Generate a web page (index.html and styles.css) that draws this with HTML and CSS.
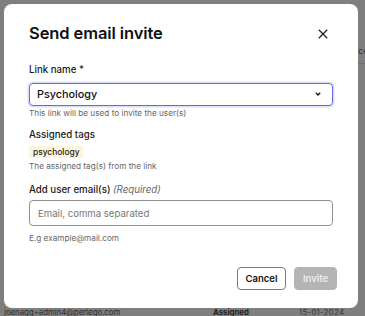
FILE: index.html
```html
<!DOCTYPE html>
<html>
<head>
<meta charset="utf-8">
<link rel="stylesheet" href="styles.css">
</head>
<body>
<div class="backdrop">
  <div class="bg-side">ce</div>
  <div class="bg-line"></div>
  <div class="bg-row">
    <span class="bg-email">joenagg+admin4@perlego.com</span>
    <span class="bg-status">Assigned</span>
    <span class="bg-date">15-01-2024</span>
  </div>
</div>
<div class="modal">
  <div class="header">
    <h1 class="title">Send email invite</h1>
    <svg class="close" width="10" height="10" viewBox="0 0 10 10"><path d="M0.8 0.8L9.2 9.2M9.2 0.8L0.8 9.2" stroke="#222" stroke-width="1.3" fill="none"/></svg>
  </div>
  <div class="field">
    <label class="label">Link name *</label>
    <div class="select">
      <span>Psychology</span>
      <svg width="6" height="4" viewBox="0 0 6 4"><path d="M0.8 0.8L3 3L5.2 0.8" stroke="#111" stroke-width="1.3" fill="none"/></svg>
    </div>
    <div class="help">This link will be used to invite the user(s)</div>
  </div>
  <div class="field tags-field">
    <label class="label">Assigned tags</label>
    <span class="tag">psychology</span>
    <div class="help tag-help">The assigned tag(s) from the link</div>
  </div>
  <div class="field email-field">
    <label class="label">Add user email(s) <em class="req">(Required)</em></label>
    <div class="input">Email, comma separated</div>
    <div class="help ex">E.g example@mail.com</div>
  </div>
  <div class="actions">
    <button class="btn cancel">Cancel</button>
    <button class="btn invite">Invite</button>
  </div>
</div>
</body>
</html>
```
FILE: styles.css
```css
* { box-sizing: border-box; }
html, body { margin: 0; padding: 0; }
body {
  width: 365px;
  height: 316px;
  background: #7f7f7f;
  font-family: Inter, "Noto Sans", sans-serif;
  position: relative;
  overflow: hidden;
}
.backdrop { position: absolute; left: 0; right: 0; top: 0; bottom: 0; overflow: hidden; }
.bg-row {
  position: absolute; left: 4px; right: 0; top: 306px;
  font-size: 7.8px; line-height: 12px; color: #2e2e2e;
  display: flex;
}
.bg-email { width: 209px; }
.bg-status { width: 86px; font-weight: 700; color: #222; }
.bg-date { color: #3a3a3a; letter-spacing: 0.3px; }
.bg-side { position: absolute; left: 358px; top: 45px; font-size: 9px; line-height: 12px; color: #333; }
.bg-line { position: absolute; left: 358px; right: 0; top: 63px; height: 1px; background: #707070; }
.modal {
  position: absolute;
  left: 4px; top: 4px;
  width: 354px; height: 304px;
  background: #fff;
  border-radius: 8px;
  padding: 19px 21px 0 25px;
  display: flex;
  flex-direction: column;
}
.header { display: flex; align-items: center; justify-content: space-between; height: 20px; padding-right: 9px; margin-bottom: 21px; }
.title { margin: 0; font-size: 16.5px; line-height: 20px; font-weight: 600; color: #111; letter-spacing: -0.1px; }
.close { margin-top: 1px; }
.field { display: flex; flex-direction: column; align-items: flex-start; width: 304px; }
.label { font-size: 9.7px; font-weight: 500; color: #1a1a1a; line-height: 12px; }
.req { color: #666; font-weight: 400; }
.select {
  margin-top: 6.5px;
  width: 304px; height: 23px;
  border: 1.5px solid #6467ef;
  box-shadow: 0 0 0 1.5px #dcdcfb;
  border-radius: 4px;
  display: flex; align-items: center; justify-content: space-between;
  padding: 0 11px 0 7px;
  font-size: 10.8px; font-weight: 500; color: #111;
}
.help { font-size: 8.2px; color: #666; margin-top: 2px; line-height: 11px; }
.tags-field { margin-top: 10px; }
.tag {
  margin-top: 5px;
  background: #fdf6dc;
  font-size: 8.4px; font-weight: 500; color: #222;
  padding: 0 4px; border-radius: 2px; line-height: 12px;
}
.tag-help { margin-top: 3px; }
.email-field { margin-top: 12px; }
.input {
  margin-top: 4.5px;
  width: 304px; height: 26px;
  border: 1.2px solid #8f8f8f;
  border-radius: 4px;
  display: flex; align-items: center;
  padding: 0 8px;
  font-size: 9.6px; color: #777;
}
.ex { margin-top: 6.5px; }
.actions { display: flex; justify-content: flex-end; gap: 8px; margin-top: 23px; }
.btn {
  height: 23.5px; border-radius: 4px;
  font-family: Inter, sans-serif; font-size: 9.5px; font-weight: 600;
  padding: 0;
}
.cancel { background: #fff; border: 1px solid #7a7a7a; color: #111; width: 49px; }
.invite { background: #b4b4b4; border: 1px solid #b4b4b4; color: #ececec; width: 43px; }
```
